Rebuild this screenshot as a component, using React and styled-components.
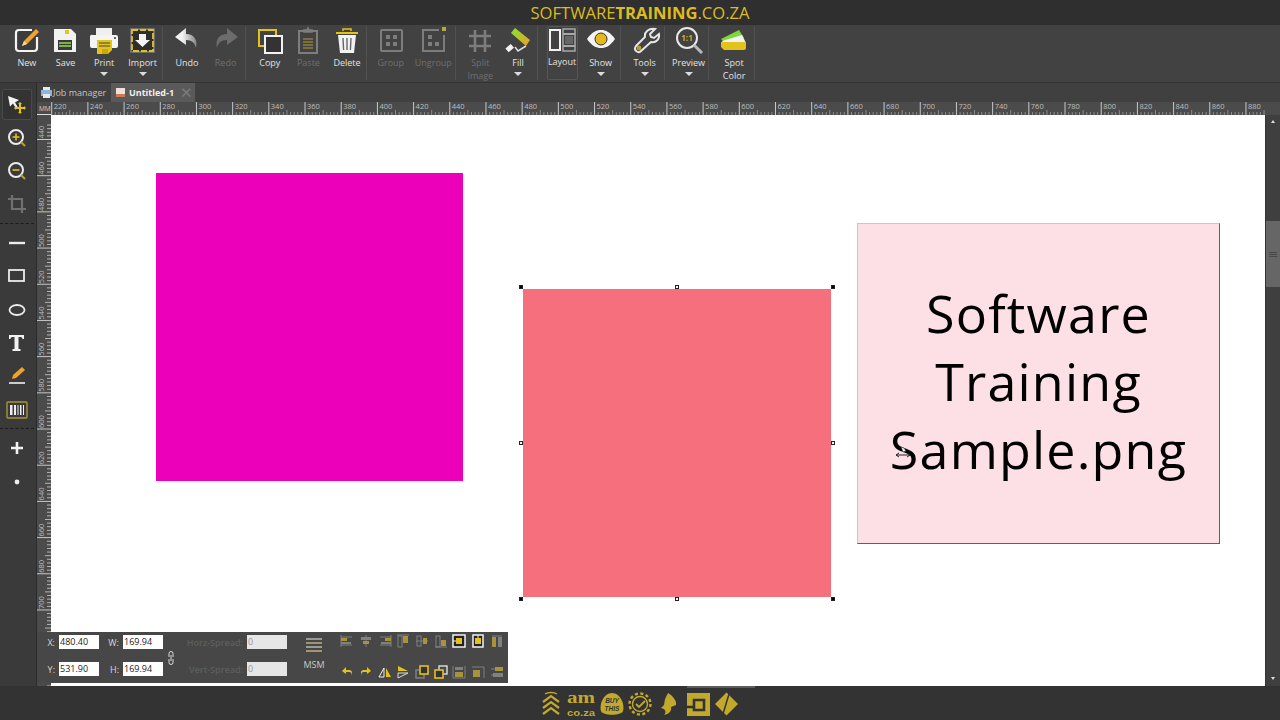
import React from 'react';
import styled, { createGlobalStyle } from 'styled-components';

const Y = '#e3c21c';
const G = '#7d7d7d';

const Global = createGlobalStyle`
html, body { margin: 0; padding: 0; background: #333; }
* { box-sizing: border-box; }
body { font-family: "Open Sans", "Liberation Sans", sans-serif; }
`;

const Page = styled.div`
width: 1280px;
height: 720px;
display: flex;
flex-direction: column;
overflow: hidden;
`;
const TitleBar = styled.div`
height: 25px;
flex: none;
background: #2f2f2f;
color: #dcbc1e;
font-size: 16.6px;
line-height: 25px;
text-align: center;
b { font-weight: 700; }
`;
const Toolbar = styled.div`
height: 58px;
flex: none;
display: flex;
background: #424242;
border-bottom: 1px solid #333;
`;
const Group = styled.div`
display: flex;
height: 54px;
margin-top: 1px;
padding-left: ${p => p.$pad || 4.7}px;
border-right: 1px solid #505050;
box-sizing: content-box;
`;
const Tool = styled.div`
width: ${p => p.$w || 38.6}px;
height: 100%;
position: relative;
display: flex;
flex-direction: column;
align-items: center;
padding-left: ${p => p.$shift || 0}px;
color: ${p => (p.$off ? '#6f6f6f' : '#e2e2e2')};
font-size: 9px;
line-height: 13px;
text-align: center;
${p => p.$active && 'border: 1px solid #565656; border-radius: 2px;'}
svg { flex: none; display: block; }
`;
const Label = styled.span`
margin-top: 2px;
white-space: pre-line;
`;
const Caret = styled.i`
width: 0;
height: 0;
margin-top: 3px;
border-left: 4px solid transparent;
border-right: 4px solid transparent;
border-top: 4px solid #dcdcdc;
`;
const Main = styled.div`
height: 603px;
flex: none;
display: flex;
position: relative;
`;
const SidePanel = styled.div`
width: 37px;
flex: none;
background: #3a3a3a;
border-right: 1px solid #2c2c2c;
padding-top: 6px;
display: flex;
flex-direction: column;
align-items: flex-start;
`;
const SideTool = styled.div`
width: 30px;
height: ${p => (p.$first ? 31 : 33.3)}px;
margin-left: 2px;
display: flex;
align-items: center;
justify-content: center;
${p => p.$first && 'margin-bottom: 1px; background: #333; border: 1px solid #4a4a4a; border-radius: 2px;'}
`;
const SideDivider = styled.div`
width: 34px;
height: 3.5px;
margin-top: 2px;
border-top: 1px dashed #1c1c1c;
`;
const Workspace = styled.div`
flex: 1;
min-width: 0;
display: flex;
flex-direction: column;
`;
const TabRow = styled.div`
height: 19px;
flex: none;
display: flex;
background: #404040;
font-size: 9px;
`;
const JobTab = styled.div`
width: 74px;
display: flex;
align-items: center;
padding-left: 3px;
color: #c4c4c4;
`;
const ActiveTab = styled.div`
width: 84px;
display: flex;
align-items: center;
padding-left: 5px;
gap: 4px;
background: #5a5a5a;
color: #f0f0f0;
font-weight: 700;
`;
const Close = styled.span`
margin-left: auto;
margin-right: 2px;
color: #7a7a7a;
font-size: 15px;
font-weight: 400;
line-height: 17px;
`;
const RulerRow = styled.div`
height: 13px;
flex: none;
display: flex;
background: #4b4b4b;
`;
const Corner = styled.div`
width: 14px;
flex: none;
font-size: 6.5px;
line-height: 13px;
color: #cfcfcf;
padding-left: 2px;
border-bottom: 1px solid #ddd;
overflow: hidden;
`;
const Body = styled.div`
flex: 1;
min-height: 0;
display: flex;
`;
const VRuler = styled.div`
width: 14px;
flex: none;
background: #4b4b4b;
`;
const Canvas = styled.div`
flex: 1;
position: relative;
background: #fff;
overflow: hidden;
`;
const Square = styled.div`
position: absolute;
left: ${p => p.$x}px;
top: ${p => p.$y}px;
width: ${p => p.$s}px;
height: ${p => p.$s}px;
background: ${p => p.$c};
`;
const Handle = styled.div`
position: absolute;
left: ${p => p.$x - 2}px;
top: ${p => p.$y - 2}px;
width: 4px;
height: 4px;
background: ${p => (p.$hollow ? '#fff' : '#000')};
border: 1px solid #222;
`;
const Picture = styled.div`
position: absolute;
left: 806px;
top: 108px;
width: 363px;
height: 321px;
padding-bottom: 5px;
background: #fde0e6;
border: 1px solid #6e5a5e;
border-top-color: #d8bfc5;
border-left-color: #d8bfc5;
display: flex;
align-items: center;
justify-content: center;
text-align: center;
color: #000;
font-size: 52px;
letter-spacing: 1.2px;
line-height: 68px;
`;
const Pointer = styled.svg`
position: absolute;
left: 844px;
top: 330px;
`;
const Scrollbar = styled.div`
width: 15px;
flex: none;
position: relative;
background: #3f3f3f;
border-left: 1px solid #333;
`;
const Arrow = styled.i`
position: absolute;
left: 5px;
width: 0;
height: 0;
border-left: 2.5px solid transparent;
border-right: 2.5px solid transparent;
${p => (p.$up ? 'top: 5px; border-bottom: 3px solid #ddd;' : 'bottom: 6px; border-top: 3px solid #ddd;')}
`;
const Thumb = styled.div`
position: absolute;
left: 0;
right: 0;
top: 106px;
height: 66px;
background: #666;
display: flex;
flex-direction: column;
gap: 1px;
align-items: center;
justify-content: center;
i { width: 8px; height: 1px; background: #484848; }
`;
const FloatPanel = styled.div`
position: absolute;
left: 37px;
bottom: 3px;
width: 471px;
height: 51px;
background: #474747;
display: flex;
font-size: 9px;
color: #d8d8d8;
`;
const Fields = styled.div`
width: 126px;
flex: none;
display: grid;
grid-template-columns: 22px 40px 24px 40px;
grid-template-rows: 14px 14px;
row-gap: 13px;
padding-top: 3px;
align-items: center;
`;
const FieldLabel = styled.span`
text-align: right;
padding-right: 4px;
color: ${p => (p.$off ? '#5e5e5e' : '#d8d8d8')};
font-weight: ${p => (p.$off ? 600 : 400)};
white-space: nowrap;
`;
const Input = styled.div`
height: 14px;
background: ${p => (p.$off ? '#e6e6e6' : '#fff')};
color: ${p => (p.$off ? '#999' : '#222')};
font-size: 9px;
line-height: 14px;
padding-left: 1px;
`;
const LinkBox = styled.div`
width: 16px;
flex: none;
display: flex;
align-items: center;
justify-content: center;
`;
const Spread = styled.div`
width: 108px;
flex: none;
display: grid;
grid-template-columns: 68px 40px;
grid-template-rows: 14px 14px;
row-gap: 13px;
padding-top: 3px;
align-items: center;
`;
const MsmBox = styled.div`
width: 54px;
flex: none;
display: flex;
flex-direction: column;
align-items: center;
padding-top: 4px;
gap: 4px;
font-size: 9px;
color: #c8c8c8;
`;
const AlignGrid = styled.div`
flex: none;
display: grid;
grid-template-columns: repeat(9, 18.7px);
grid-template-rows: 20px 20px;
row-gap: 11px;
margin-left: -3px;
margin-top: -1px;
justify-items: center;
align-items: center;
`;
const BottomBar = styled.div`
flex: 1;
position: relative;
background: #333;
display: flex;
align-items: center;
justify-content: center;
padding-top: 2px;
`;
const HScroll = styled.div`
position: absolute;
left: 687px;
top: 0;
width: 68px;
height: 2px;
background: #5c5c5c;
`;

// toolbar icons, viewBox 30x28
const Ico = ({ children, w = 30, h = 28 }) => (
  <svg width={w} height={h} viewBox={`0 0 ${w} ${h}`}>{children}</svg>
);

const IconNew = () => (
  <Ico>
    <path d="M20 4H7a3 3 0 0 0-3 3v15a3 3 0 0 0 3 3h15a3 3 0 0 0 3-3V11" fill="#3c3c3c" stroke="#f4f4f4" strokeWidth="2.2" />
    <path d="M24 3l3 3-12 12-5 2 2-5z" fill="#f0a232" />
    <path d="M12 15l3 3-5 2z" fill="#f5d9a2" />
  </Ico>
);
const IconSave = () => (
  <Ico>
    <path d="M4 3h17l5 5v18H4z" fill="#f2f2f2" />
    <rect x="15" y="4" width="4" height="4" fill={Y} />
    <rect x="8" y="14" width="14" height="10" fill="#3a3a3a" />
    <rect x="9" y="16" width="12" height="2" fill="#79b342" />
    <rect x="9" y="19" width="12" height="2" fill="#79b342" />
  </Ico>
);
const IconPrint = () => (
  <Ico>
    <rect x="7" y="2" width="16" height="8" fill="#efefef" />
    <path d="M4 9h23a2 2 0 0 1 2 2v9a2 2 0 0 1-2 2H3a2 2 0 0 1-2-2v-9a2 2 0 0 1 3-2z" fill="#f4f4f4" />
    <circle cx="26" cy="12" r="1" fill="#333" />
    <path d="M8 14h15v10l-4 4H8z" fill={Y} />
    <path d="M10 17h11M10 20h11" stroke="#444" strokeWidth="1" />
    <path d="M13 23h6v5h-6z" fill="#c9a80f" />
  </Ico>
);
const IconImport = () => (
  <Ico>
    <rect x="2" y="2" width="25" height="25" fill="#6e6e6e" rx="1" />
    <rect x="4" y="4" width="21" height="21" fill="#2e2e2e" stroke={Y} strokeWidth="1.8" strokeDasharray="6 2" />
    <path d="M11 8h7v6h4l-7.500 7L7 14h4z" fill="#f4f4f4" />
  </Ico>
);
const IconUndo = () => (
  <Ico>
    <defs>
      <linearGradient id="undoFade" x1="0" y1="0" x2="1" y2="0">
        <stop offset="0.35" stopColor="#f2f2f2" />
        <stop offset="1" stopColor="#858585" />
      </linearGradient>
    </defs>
    <path d="M14 2L3 11l11 8v-5c6 0 9 3 10 8 2-8-2-14-10-14z" fill="url(#undoFade)" />
  </Ico>
);
const IconRedo = () => (
  <Ico>
    <path d="M16 2l11 9-11 8v-5c-6 0-9 3-10 8-2-8 2-14 10-14z" fill="#6c6c6c" />
  </Ico>
);
const IconCopy = () => (
  <Ico>
    <rect x="4" y="4" width="17" height="16" fill="none" stroke={Y} strokeWidth="2" />
    <rect x="10" y="10" width="17" height="17" fill="#333" stroke="#f2f2f2" strokeWidth="2" />
  </Ico>
);
const IconPaste = () => (
  <Ico>
    <rect x="6" y="5" width="18" height="22" fill="none" stroke={G} strokeWidth="2" />
    <path d="M11 6V4h3l1-2 1 2h3v2z" fill="none" stroke={G} strokeWidth="1.6" />
    <path d="M10 13h10M10 16h10M10 19h10M10 22h10" stroke="#8f7f36" strokeWidth="1.3" />
  </Ico>
);
const IconDelete = () => (
  <Ico>
    <path d="M4 6h22v2H4z" fill={Y} />
    <path d="M11 5V3h8v2" fill="none" stroke={Y} strokeWidth="1.5" />
    <path d="M6 9h18l-2 18H8z" fill="#f2f2f2" />
    <path d="M11 12l.6 12M15 12v12M19 12l-.6 12" stroke="#666" strokeWidth="1.4" />
  </Ico>
);
const IconGroup = () => (
  <Ico>
    <rect x="5" y="4" width="21" height="21" rx="1" fill="none" stroke={G} strokeWidth="2" />
    <path d="M10 9h4v4h-4zM17 9h4v4h-4zM10 16h4v4h-4zM17 16h4v4h-4z" fill={G} />
  </Ico>
);
const IconUngroup = () => (
  <Ico>
    <path d="M21 4H5v21h21V9" fill="none" stroke={G} strokeWidth="2" />
    <path d="M10 9h4v4h-4zM10 16h4v4h-4zM17 16h4v4h-4z" fill={G} />
    <rect x="24" y="1" width="4" height="4" fill="#b3ad3a" />
  </Ico>
);
const IconSplit = () => (
  <Ico>
    <path d="M10 4v22M20 4v22M4 10h22M4 20h22" stroke={G} strokeWidth="2.6" />
  </Ico>
);
const IconFill = () => (
  <Ico>
    <defs>
      <linearGradient id="roll" x1="0" y1="0" x2="1" y2="1">
        <stop offset="0" stopColor="#7fe82a" />
        <stop offset="1" stopColor="#f29a2e" />
      </linearGradient>
    </defs>
    <path d="M12 2l15 12-4 6L8 7z" fill="url(#roll)" />
    <path d="M23 20l-8 5-3-4" fill="none" stroke="#ddd" strokeWidth="1.5" />
    <rect x="3" y="20" width="7" height="5" transform="rotate(-40 6 22)" fill="#f2f2f2" />
  </Ico>
);
const IconLayout = () => (
  <Ico w={29} h={26}>
    <rect x="2" y="3" width="10" height="20" fill="none" stroke="#f2f2f2" strokeWidth="2" />
    <rect x="15" y="2" width="12" height="22" fill="none" stroke="#a9a9a9" strokeWidth="1.5" />
    <path d="M15 7h12M15 19h12" stroke="#a9a9a9" strokeWidth="2" />
    <rect x="17" y="9" width="8" height="8" fill="#666" />
  </Ico>
);
const IconShow = () => (
  <Ico>
    <path d="M1 13C6 6 10 4 15 4s9 2 14 9c-5 7-9 9-14 9S6 20 1 13z" fill="#f4f4f4" />
    <circle cx="15" cy="13" r="6" fill="#e6b81c" stroke="#333" strokeWidth="1" />
  </Ico>
);
const IconTools = () => (
  <Ico>
    <path d="M25 3l-5 5 1 3 3 1 5-4c1 5-3 9-8 8L11 25c-3 3-8-1-5-5L15 11c-1-5 4-9 10-8z" fill="none" stroke="#e6e6e6" strokeWidth="2" />
    <circle cx="9" cy="22" r="2.400" fill="#b3a02c" />
  </Ico>
);
const IconPreview = () => (
  <Ico>
    <circle cx="13" cy="12" r="10" fill="none" stroke="#e8e8e8" strokeWidth="2" />
    <path d="M20 19l8 8" stroke="#b8b8b8" strokeWidth="3" />
    <text x="13" y="15" textAnchor="middle" fontSize="8" fontWeight="700" fill="#c9ad2a" fontFamily="Open Sans">1:1</text>
  </Ico>
);
const IconSpot = () => (
  <Ico>
    <path d="M2 13L20 4l5 8-20 4z" fill="#7fd83a" />
    <path d="M3 15l20-6 4 8-22 2z" fill="#f2f2f2" />
    <path d="M2 16h25v6a2 2 0 0 1-2 2H5l-3-3z" fill="#e3c21c" />
  </Ico>
);

const tools = [
  { pad: 7.6, items: [['New', IconNew], ['Save', IconSave], ['Print', IconPrint, { caret: true }], ['Import', IconImport, { caret: true }]] },
  { items: [['Undo', IconUndo], ['Redo', IconRedo, { off: true }]] },
  { items: [['Copy', IconCopy], ['Paste', IconPaste, { off: true }], ['Delete', IconDelete]] },
  { pad: 3, items: [['Group', IconGroup, { off: true, w: 41 }], ['Ungroup', IconUngroup, { off: true, w: 44 }]] },
  { items: [['Split\nImage', IconSplit, { off: true }], ['Fill', IconFill, { caret: true, w: 37 }]] },
  { pad: 9, items: [['Layout', IconLayout, { active: true, w: 31 }], ['Show', IconShow, { caret: true, w: 42, shift: 4 }]] },
  { pad: 5, items: [['Tools', IconTools, { caret: true, w: 38 }]] },
  { pad: 5, items: [['Preview', IconPreview, { caret: true, w: 38 }]] },
  { pad: 6, items: [['Spot\nColor', IconSpot, { w: 39 }]] },
];

// left hand tools
const S = ({ children }) => <svg width="22" height="22" viewBox="0 0 22 22">{children}</svg>;
const sideA = [
  <S><path d="M2 2l11 4-4 2.500 3 5-2 1-3-5-3 3z" fill="#f2f2f2" /><path d="M14 9l2 2h-1v3h3v-1l2 2-2 2v-1h-3v3h1l-2 2-2-2h1v-3h-3v1l-2-2 2-2v1h3v-3h-1z" fill={Y} transform="translate(0 -1)" /></S>,
  <S><circle cx="10" cy="10" r="7" fill="none" stroke="#ececec" strokeWidth="2" /><path d="M6.500 10h7M10 6.500v7" stroke={Y} strokeWidth="1.600" /><path d="M15 15l4 4" stroke="#b9a22c" strokeWidth="2" /></S>,
  <S><circle cx="10" cy="10" r="7" fill="none" stroke="#ececec" strokeWidth="2" /><path d="M6.500 10h7" stroke={Y} strokeWidth="1.600" /><path d="M15 15l4 4" stroke="#b9a22c" strokeWidth="2" /></S>,
  <S><path d="M6 2v14h14M2 6h14v14" fill="none" stroke="#707070" strokeWidth="2.200" /></S>,
];
const sideB = [
  <S><path d="M3 11h16" stroke="#ececec" strokeWidth="2.400" /></S>,
  <S><rect x="3" y="5" width="15" height="11" fill="none" stroke="#ececec" strokeWidth="1.800" /></S>,
  <S><ellipse cx="11" cy="11" rx="7.500" ry="5" fill="none" stroke="#ececec" strokeWidth="1.800" /></S>,
  <S><path d="M3 3h15v4h-1.500c0-1-.5-2-2-2H12.500v12h2v2H6.500v-2h2V5H6.500c-1.500 0-2 1-2 2H3z" fill="#f2f2f2" /></S>,
  <S><path d="M16 2l3 3-9 8-4 1 1-4z" fill="#eda22e" /><path d="M3 18h16" stroke="#f2f2f2" strokeWidth="1.600" /></S>,
  <S><rect x="1" y="3" width="20" height="16" rx="1" fill="#3a3a3a" stroke="#a8943a" strokeWidth="1.400" /><path d="M4 6h2.500v10H4zM8 6h2v10H8zM11.500 6h1v10h-1zM14 6h1.500v10H14zM17 6h1v10h-1z" fill="#ededed" /></S>,
];
const sideC = [
  <S><path d="M11 5v12M5 11h12" stroke="#f2f2f2" strokeWidth="2.600" /></S>,
  <S><circle cx="11" cy="11" r="2.400" fill="#ececec" /></S>,
];

// floating panel icons
const M = ({ children }) => <svg width="14" height="14" viewBox="0 0 14 14">{children}</svg>;
const D = '#808080';
const T = '#a8923a';
const alignIcons = [
  <M><path d="M1 1v12M1 3h11M1 11h11" stroke={D} fill="none" /><rect x="1" y="4" width="6" height="3" fill={T} /><rect x="1" y="8" width="10" height="2" fill={D} /></M>,
  <M><path d="M7 1v12" stroke={D} /><rect x="2" y="3" width="10" height="3" fill={D} /><rect x="4" y="7" width="6" height="3" fill={T} /></M>,
  <M><path d="M13 1v12M2 3h11M2 11h11" stroke={D} fill="none" /><rect x="7" y="4" width="6" height="3" fill={T} /><rect x="3" y="8" width="10" height="2" fill={D} /></M>,
  <M><path d="M1 1h12" stroke={D} /><rect x="2" y="2" width="4" height="11" fill="none" stroke={D} /><rect x="7" y="2" width="5" height="7" fill={T} /></M>,
  <M><path d="M1 7h12" stroke={D} /><rect x="2" y="2" width="4" height="10" fill="none" stroke={D} /><rect x="8" y="4" width="4" height="6" fill={T} /></M>,
  <M><path d="M1 13h12" stroke={D} /><rect x="2" y="2" width="4" height="11" fill="none" stroke={D} /><rect x="7" y="6" width="5" height="6" fill={T} /></M>,
  <M><rect x="1" y="1" width="12" height="12" fill="#222" stroke="#f2f2f2" strokeWidth="1.500" /><rect x="4" y="4" width="6" height="6" fill={Y} /><path d="M1 7h3" stroke="#f2f2f2" /></M>,
  <M><rect x="2" y="1" width="10" height="12" fill="#222" stroke="#f2f2f2" strokeWidth="1.500" /><rect x="4" y="4" width="6" height="6" fill={Y} /><path d="M7 1v3" stroke="#f2f2f2" /></M>,
  <M><path d="M2 2h10" stroke={D} /><rect x="2" y="3" width="4" height="10" fill={T} /><rect x="8" y="3" width="4" height="10" fill={D} /></M>,
  <M><path d="M6 2L2 6l4 3V7h3c2 0 3 1 3 5V8c0-3-2-3-3-3H6z" fill={Y} /></M>,
  <M><path d="M8 2l4 4-4 3V7H5C3 7 2 8 2 12V8c0-3 2-3 3-3h3z" fill={Y} /></M>,
  <M><path d="M6 3L1 12h5z" fill="none" stroke="#f2f2f2" /><path d="M8 3l5 9H8z" fill={Y} /></M>,
  <M><path d="M2 1l10 5H2z" fill={Y} /><path d="M2 8h10L2 13z" fill="none" stroke="#ddd" /></M>,
  <M><rect x="1" y="5" width="8" height="8" fill="none" stroke={D} strokeWidth="1.500" /><rect x="5" y="1" width="8" height="8" fill="#333" stroke={Y} strokeWidth="1.600" /></M>,
  <M><rect x="5" y="1" width="8" height="8" fill="none" stroke="#ddd" strokeWidth="1.400" /><rect x="1" y="5" width="8" height="8" fill="#333" stroke={Y} strokeWidth="1.600" /></M>,
  <M><path d="M1 1v12h12V1" fill="none" stroke={D} /><rect x="3" y="7" width="8" height="5" fill={T} /><rect x="3" y="2" width="8" height="3" fill={D} /></M>,
  <M><path d="M1 2h12v11" fill="none" stroke={D} /><rect x="2" y="5" width="7" height="7" fill={T} /></M>,
  <M><path d="M1 4h4M1 10h4" stroke={D} /><rect x="5" y="2" width="8" height="4" fill={T} /><rect x="3" y="8" width="10" height="4" fill={D} /></M>,
];

const HRuler = () => {
  const out = [];
  for (let i = 0; i < 340; i++) {
    const x = 14.7 + i * 3.619;
    if (x > 1228) break;
    const big = i % 10 === 0;
    const mid = i % 5 === 0;
    out.push(<line key={i} x1={x} x2={x} y1={big ? 0 : mid ? 8 : 10} y2={13} stroke={big ? '#c8c8c8' : '#8d8d8d'} />);
    if (big && x < 1215) out.push(<text key={`t${i}`} x={x + 2} y={7} fontSize="7.5" fill="#bdbdbd" fontFamily="Open Sans">{220 + i * 2}</text>);
  }
  return <svg width="1214" height="13" viewBox="14 0 1214 13">{out}</svg>;
};
const VRulerMarks = () => {
  const out = [];
  for (let i = -4; i < 156; i++) {
    const y = 24.5 + i * 3.619;
    const big = i % 10 === 0;
    const mid = i % 5 === 0;
    out.push(<line key={i} y1={y} y2={y} x1={big ? 0 : mid ? 8 : 10} x2={14} stroke={big ? '#c8c8c8' : '#b5b5b5'} />);
    if (big && i <= 130) out.push(<text key={`t${i}`} transform={`translate(7 ${y - 1}) rotate(-90)`} fontSize="7.5" fill="#bdbdbd" fontFamily="Open Sans">{440 + i * 2}</text>);
  }
  return <svg width="14" height="571" style={{ display: 'block' }}>{out}</svg>;
};

const handles = [
  [470, 172], [626, 172, 1], [782, 172],
  [470, 328, 1], [782, 328, 1],
  [470, 484], [626, 484, 1], [782, 484],
];

const Logos = () => (
  <svg width="200" height="32" viewBox="0 -3 200 32">
    <g fill="none" stroke="#c2a92c" strokeWidth="2.200">
      <path d="M3 11l8-6 8 6M3 17l8-6 8 6M3 23l8-6 8 6" />
      <path d="M5 3c3-2 9-2 12 0" strokeWidth="1.500" />
    </g>
    <text x="27" y="12" fontSize="17" fontWeight="800" textLength="28" lengthAdjust="spacingAndGlyphs" fill="#c2a92c" fontFamily="Liberation Serif">am</text>
    <text x="27" y="24.500" fontSize="9.500" fontWeight="700" textLength="28" lengthAdjust="spacingAndGlyphs" fill="#c2a92c" fontFamily="Liberation Sans">co.za</text>
    <path d="M72 2c8 0 13 11 11 18-2 5-20 5-22 0-2-7 3-18 11-18z" fill="#c2a92c" />
    <text x="72" y="12" textAnchor="middle" fontSize="6.500" fontStyle="italic" fontWeight="700" fill="#333" fontFamily="Liberation Sans">BUY</text>
    <text x="72" y="20" textAnchor="middle" fontSize="6.500" fontStyle="italic" fontWeight="700" fill="#333" fontFamily="Liberation Sans">THIS</text>
    <circle cx="100" cy="13" r="7.500" fill="none" stroke="#c2a92c" strokeWidth="1.400" />
    <circle cx="100" cy="13" r="10.500" fill="none" stroke="#c2a92c" strokeWidth="2.400" strokeDasharray="3 2.500" />
    <path d="M96 13l3 3 6-6" fill="none" stroke="#c2a92c" strokeWidth="1.800" />
    <path d="M128 2c5 3 9 8 8 12l-5 2c1 4-2 7-7 8 2-2 2-4 0-6l-3-1 3-3 1-6z" fill="#c2a92c" />
    <path d="M147 2h23v23h-23z" fill="#c2a92c" />
    <path d="M154 9h10v10h-10zM147 16h7" fill="none" stroke="#333" strokeWidth="2.600" />
    <path d="M186.500 1.500l11.500 11.500-11.500 11.500L175 13z" fill="#c2a92c" />
    <path d="M189 3l-6 20" stroke="#333" strokeWidth="1.500" />
  </svg>
);

export default function App() {
  return (
    <Page>
      <Global />
      <TitleBar>SOFTWARE<b>TRAINING</b>.CO.ZA</TitleBar>
      <Toolbar>
        {tools.map((g, i) => (
          <Group key={i} $pad={g.pad}>
            {g.items.map(([name, Icon, o = {}]) => (
              <Tool key={name} $off={o.off} $w={o.w} $active={o.active} $shift={o.shift}>
                <Icon />
                <Label>{name}</Label>
                {o.caret && <Caret />}
              </Tool>
            ))}
          </Group>
        ))}
      </Toolbar>
      <Main>
        <SidePanel>
          {sideA.map((ic, i) => <SideTool key={i} $first={i === 0}>{ic}</SideTool>)}
          <SideDivider />
          {sideB.map((ic, i) => <SideTool key={i}>{ic}</SideTool>)}
          <SideDivider />
          {sideC.map((ic, i) => <SideTool key={i}>{ic}</SideTool>)}
        </SidePanel>
        <Workspace>
          <TabRow>
            <JobTab>
              <svg width="13" height="13" viewBox="0 0 13 13"><rect x="3" y="1" width="7" height="4" fill="#e8e8e8" /><rect x="1" y="4" width="11" height="6" fill="#8fb4d8" /><rect x="3" y="8" width="7" height="4" fill="#e8e8e8" /></svg>
              Job manager
            </JobTab>
            <ActiveTab>
              <svg width="9" height="9" viewBox="0 0 9 9"><rect width="9" height="9" fill="#f0e2d8" /><rect y="6" width="9" height="3" fill="#c87a5a" /></svg>
              Untitled-1
              <Close>✕</Close>
            </ActiveTab>
          </TabRow>
          <RulerRow>
            <Corner>MM</Corner>
            <HRuler />
          </RulerRow>
          <Body>
            <VRuler><VRulerMarks /></VRuler>
            <Canvas>
              <Square $x={104.5} $y={58} $s={307.5} $c="#ec00ba" />
              <Square $x={472} $y={174} $s={308} $c="#f56f7d" />
              {handles.map(([x, y, h]) => <Handle key={`${x}-${y}`} $x={x} $y={y} $hollow={h} />)}
              <Picture>Software<br />Training<br />Sample.png</Picture>
              <Pointer width="18" height="18" viewBox="0 0 18 18">
                <path d="M1 10h14M1 10l3-2M1 10l3 2M15 10l-3-2M15 10l-3 2" stroke="#222" fill="none" />
                <path d="M6 2l3 1 2 3-3 1z" fill="#eee" stroke="#333" strokeWidth="0.600" />
              </Pointer>
            </Canvas>
            <Scrollbar>
              <Arrow $up />
              <Thumb><i /><i /><i /></Thumb>
              <Arrow />
            </Scrollbar>
          </Body>
        </Workspace>
        <FloatPanel>
          <Fields>
            <FieldLabel>X:</FieldLabel><Input>480.40</Input><FieldLabel>W:</FieldLabel><Input>169.94</Input>
            <FieldLabel>Y:</FieldLabel><Input>531.90</Input><FieldLabel>H:</FieldLabel><Input>169.94</Input>
          </Fields>
          <LinkBox>
            <svg width="6" height="14" viewBox="0 0 6 14"><path d="M1 6V2.500a2 2 0 0 1 4 0V6M1 8v3.500a2 2 0 0 0 4 0V8M3 4v6" fill="none" stroke="#ddd" /></svg>
          </LinkBox>
          <Spread>
            <FieldLabel $off>Horz-Spread:</FieldLabel><Input $off>0</Input>
            <FieldLabel $off>Vert-Spread:</FieldLabel><Input $off>0</Input>
          </Spread>
          <MsmBox>
            <svg width="18" height="18" viewBox="0 0 18 18"><path d="M1 3h16M1 7h16M1 11h16M1 15h16" stroke="#eee" strokeWidth="1.200" /><path d="M1 7h16M1 15h16" stroke="#a8923a" strokeWidth="1.200" /></svg>
            MSM
          </MsmBox>
          <AlignGrid>
            {alignIcons.map((ic, i) => <React.Fragment key={i}>{ic}</React.Fragment>)}
          </AlignGrid>
        </FloatPanel>
      </Main>
      <BottomBar>
        <HScroll />
        <Logos />
      </BottomBar>
    </Page>
  );
}
